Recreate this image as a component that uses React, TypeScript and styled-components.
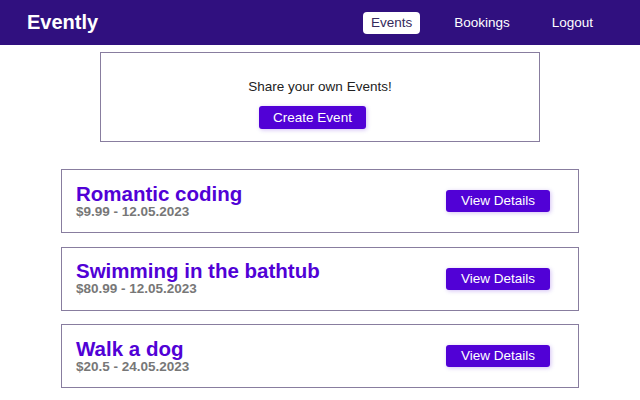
import React from 'react'
import styled, { createGlobalStyle } from 'styled-components'

const GlobalStyle = createGlobalStyle`
    * {
        box-sizing: border-box;
    }

    body {
        margin: 0;
        font-family: "Liberation Sans", Arial, sans-serif;
        background: #ffffff;
    }
`

const Header = styled.header`
    height: 45px;
    background: #30107f;
    display: flex;
    align-items: center;
    justify-content: space-between;
    padding: 0 39px 0 27px;
`

const Logo = styled.h1`
    margin: 0;
    font-size: 20px;
    font-weight: 700;
    color: #ffffff;
`

const NavList = styled.ul`
    list-style: none;
    margin: 0;
    padding: 0;
    display: flex;
    align-items: center;
    gap: 26px;
`

const NavLink = styled.a<{ $active?: boolean }>`
    display: block;
    padding: 3px 8px;
    line-height: 16px;
    font-size: 13.5px;
    border-radius: 4px;
    text-decoration: none;
    color: ${p => (p.$active ? '#352a5c' : '#ffffff')};
    background: ${p => (p.$active ? '#ffffff' : 'transparent')};
`

const Main = styled.main`
    display: flex;
    flex-direction: column;
    align-items: center;
`

const Control = styled.section`
    width: 440px;
    margin-top: 7px;
    border: 1px solid #887d9f;
    padding: 13px 13px 12px;
    text-align: center;

    p {
        margin: 13px 0 12px;
        font-size: 13.5px;
        color: #222222;
    }
`

const Button = styled.button`
    border: none;
    border-radius: 3px;
    background: #5101d6;
    color: #ffffff;
    font-family: inherit;
    font-size: 13.5px;
    line-height: 16px;
    padding: 3px 15px;
    box-shadow: 1px 1px 4px rgba(81, 1, 214, 0.25);
    cursor: pointer;
`

const CreateButton = styled(Button)`
    padding: 3.5px 14.5px;
    margin-right: 15px;
`

const EventList = styled.ul`
    list-style: none;
    margin: 27px 0 0;
    padding: 0;
    width: 518px;
    display: flex;
    flex-direction: column;
    gap: 13.5px;
`

const EventItem = styled.li`
    height: 64px;
    border: 1px solid #887d9f;
    padding: 0 28px 0 14px;
    display: flex;
    align-items: center;
    justify-content: space-between;
`

const Title = styled.h2`
    margin: 0;
    font-size: 20.5px;
    line-height: 20px;
    font-weight: 700;
    color: #5101d6;
`

const Meta = styled.h3`
    margin: 0;
    font-size: 13.5px;
    line-height: 15px;
    font-weight: 700;
    color: #777777;
`

const events = [
    { title: 'Romantic coding', price: '$9.99', date: '12.05.2023' },
    { title: 'Swimming in the bathtub', price: '$80.99', date: '12.05.2023' },
    { title: 'Walk a dog', price: '$20.5', date: '24.05.2023' },
]

export default function App() {
    return (
        <>
            <GlobalStyle />
            <Header>
                <Logo>Evently</Logo>
                <nav>
                    <NavList>
                        <li><NavLink href="#" $active>Events</NavLink></li>
                        <li><NavLink href="#">Bookings</NavLink></li>
                        <li><NavLink href="#">Logout</NavLink></li>
                    </NavList>
                </nav>
            </Header>
            <Main>
                <Control>
                    <p>Share your own Events!</p>
                    <CreateButton>Create Event</CreateButton>
                </Control>
                <EventList>
                    {events.map(e => (
                        <EventItem key={e.title}>
                            <div>
                                <Title>{e.title}</Title>
                                <Meta>{e.price} - {e.date}</Meta>
                            </div>
                            <Button>View Details</Button>
                        </EventItem>
                    ))}
                </EventList>
            </Main>
        </>
    )
}
